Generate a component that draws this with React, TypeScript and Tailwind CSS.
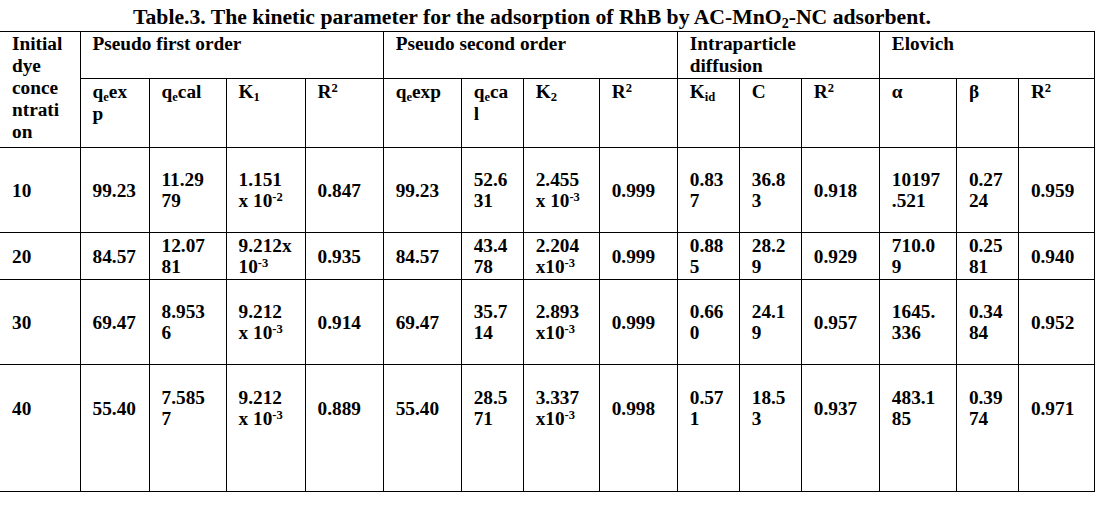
import type { ReactNode } from "react"

type Cell = ReactNode

// smaller raised / lowered marks, as in the printed table
const Up = ({ children }: { children: ReactNode }) => <sup className="text-[65%]">{children}</sup>
const Dn = ({ children }: { children: ReactNode }) => <sub className="text-[65%]">{children}</sub>

const Sci = ({ base, exp }: { base: string; exp: string }) => (
  <>
    {base}
    <Up>{exp}</Up>
  </>
)

const two = (a: Cell, b: Cell) => (
  <>
    {a}
    <br />
    {b}
  </>
)

interface Row {
  conc: string
  cells: Cell[]
  height: string
  pad?: string
}

const ROWS: Row[] = [
  {
    conc: "10",
    height: "h-[85px]",
    cells: [
      "99.23",
      two("11.29", "79"),
      two("1.151", <Sci base="x 10" exp="-2" />),
      "0.847",
      "99.23",
      two("52.6", "31"),
      two("2.455", <Sci base="x 10" exp="-3" />),
      "0.999",
      two("0.83", "7"),
      two("36.8", "3"),
      "0.918",
      two("10197", ".521"),
      two("0.27", "24"),
      "0.959",
    ],
  },
  {
    conc: "20",
    height: "h-[47px]",
    cells: [
      "84.57",
      two("12.07", "81"),
      two("9.212x", <Sci base="10" exp="-3" />),
      "0.935",
      "84.57",
      two("43.4", "78"),
      two("2.204", <Sci base="x10" exp="-3" />),
      "0.999",
      two("0.88", "5"),
      two("28.2", "9"),
      "0.929",
      two("710.0", "9"),
      two("0.25", "81"),
      "0.940",
    ],
  },
  {
    conc: "30",
    height: "h-[85px]",
    cells: [
      "69.47",
      two("8.953", "6"),
      two("9.212", <Sci base="x 10" exp="-3" />),
      "0.914",
      "69.47",
      two("35.7", "14"),
      two("2.893", <Sci base="x10" exp="-3" />),
      "0.999",
      two("0.66", "0"),
      two("24.1", "9"),
      "0.957",
      two("1645.", "336"),
      two("0.34", "84"),
      "0.952",
    ],
  },
  {
    conc: "40",
    height: "h-[127px]",
    pad: "pb-[40px]",
    cells: [
      "55.40",
      two("7.585", "7"),
      two("9.212", <Sci base="x 10" exp="-3" />),
      "0.889",
      "55.40",
      two("28.5", "71"),
      two("3.337", <Sci base="x10" exp="-3" />),
      "0.998",
      two("0.57", "1"),
      two("18.5", "3"),
      "0.937",
      two("483.1", "85"),
      two("0.39", "74"),
      "0.971",
    ],
  },
]

const SUB_HEADERS: Cell[] = [
  two(<>q<Dn>e</Dn>ex</>, "p"),
  <>q<Dn>e</Dn>cal</>,
  <>K<Dn>1</Dn></>,
  <>R<Up>2</Up></>,
  <>q<Dn>e</Dn>exp</>,
  two(<>q<Dn>e</Dn>ca</>, "l"),
  <>K<Dn>2</Dn></>,
  <>R<Up>2</Up></>,
  <>K<Dn>id</Dn></>,
  "C",
  <>R<Up>2</Up></>,
  "α",
  "β",
  <>R<Up>2</Up></>,
]

const WIDTHS = [
  "w-[80px]",
  "w-[69px]",
  "w-[77px]",
  "w-[79px]",
  "w-[78px]",
  "w-[78px]",
  "w-[62px]",
  "w-[76px]",
  "w-[78px]",
  "w-[62px]",
  "w-[62px]",
  "w-[78px]",
  "w-[77px]",
  "w-[62px]",
  "w-[76px]",
]

const cell = "border border-black pl-3 pr-1 text-left"

export default function App() {
  return (
    <div className="w-[1105px] h-[510px] bg-white text-black font-['Liberation_Serif',serif] font-bold">
      <div className="h-[31px] pt-[3px] pl-[133px] text-[21.7px] leading-[28px] whitespace-nowrap">
        Table.3. The kinetic parameter for the adsorption of RhB by AC-MnO<Dn>2</Dn>-NC adsorbent.
      </div>

      <table className="table-fixed border-collapse w-[1095px] text-[19.3px] leading-[22px]">
        <colgroup>
          {WIDTHS.map((w, i) => (
            <col key={i} className={w} />
          ))}
        </colgroup>
        <thead>
          <tr className="h-[47px]">
            <th rowSpan={2} className={`${cell} border-l-0 align-top pt-[1px] font-bold`}>
              Initial
              <br />
              dye
              <br />
              conce
              <br />
              ntrati
              <br />
              on
            </th>
            <th colSpan={4} className={`${cell} align-top pt-[1px] font-bold`}>
              Pseudo first order
            </th>
            <th colSpan={4} className={`${cell} align-top pt-[1px] font-bold`}>
              Pseudo second order
            </th>
            <th colSpan={3} className={`${cell} align-top pt-[1px] font-bold`}>
              Intraparticle
              <br />
              diffusion
            </th>
            <th colSpan={3} className={`${cell} align-top pt-[1px] font-bold`}>
              Elovich
            </th>
          </tr>
          <tr className="h-[69px]">
            {SUB_HEADERS.map((h, i) => (
              <th key={i} className={`${cell} align-top pt-[2px] font-bold`}>
                {h}
              </th>
            ))}
          </tr>
        </thead>
        <tbody className="leading-[21px]">
          {ROWS.map((r) => (
            <tr key={r.conc} className={r.height}>
              <td className={`${cell} border-l-0 align-middle ${r.pad ?? ""}`}>{r.conc}</td>
              {r.cells.map((c, i) => (
                <td key={i} className={`${cell} align-middle ${r.pad ?? ""}`}>
                  {c}
                </td>
              ))}
            </tr>
          ))}
        </tbody>
      </table>
    </div>
  )
}
